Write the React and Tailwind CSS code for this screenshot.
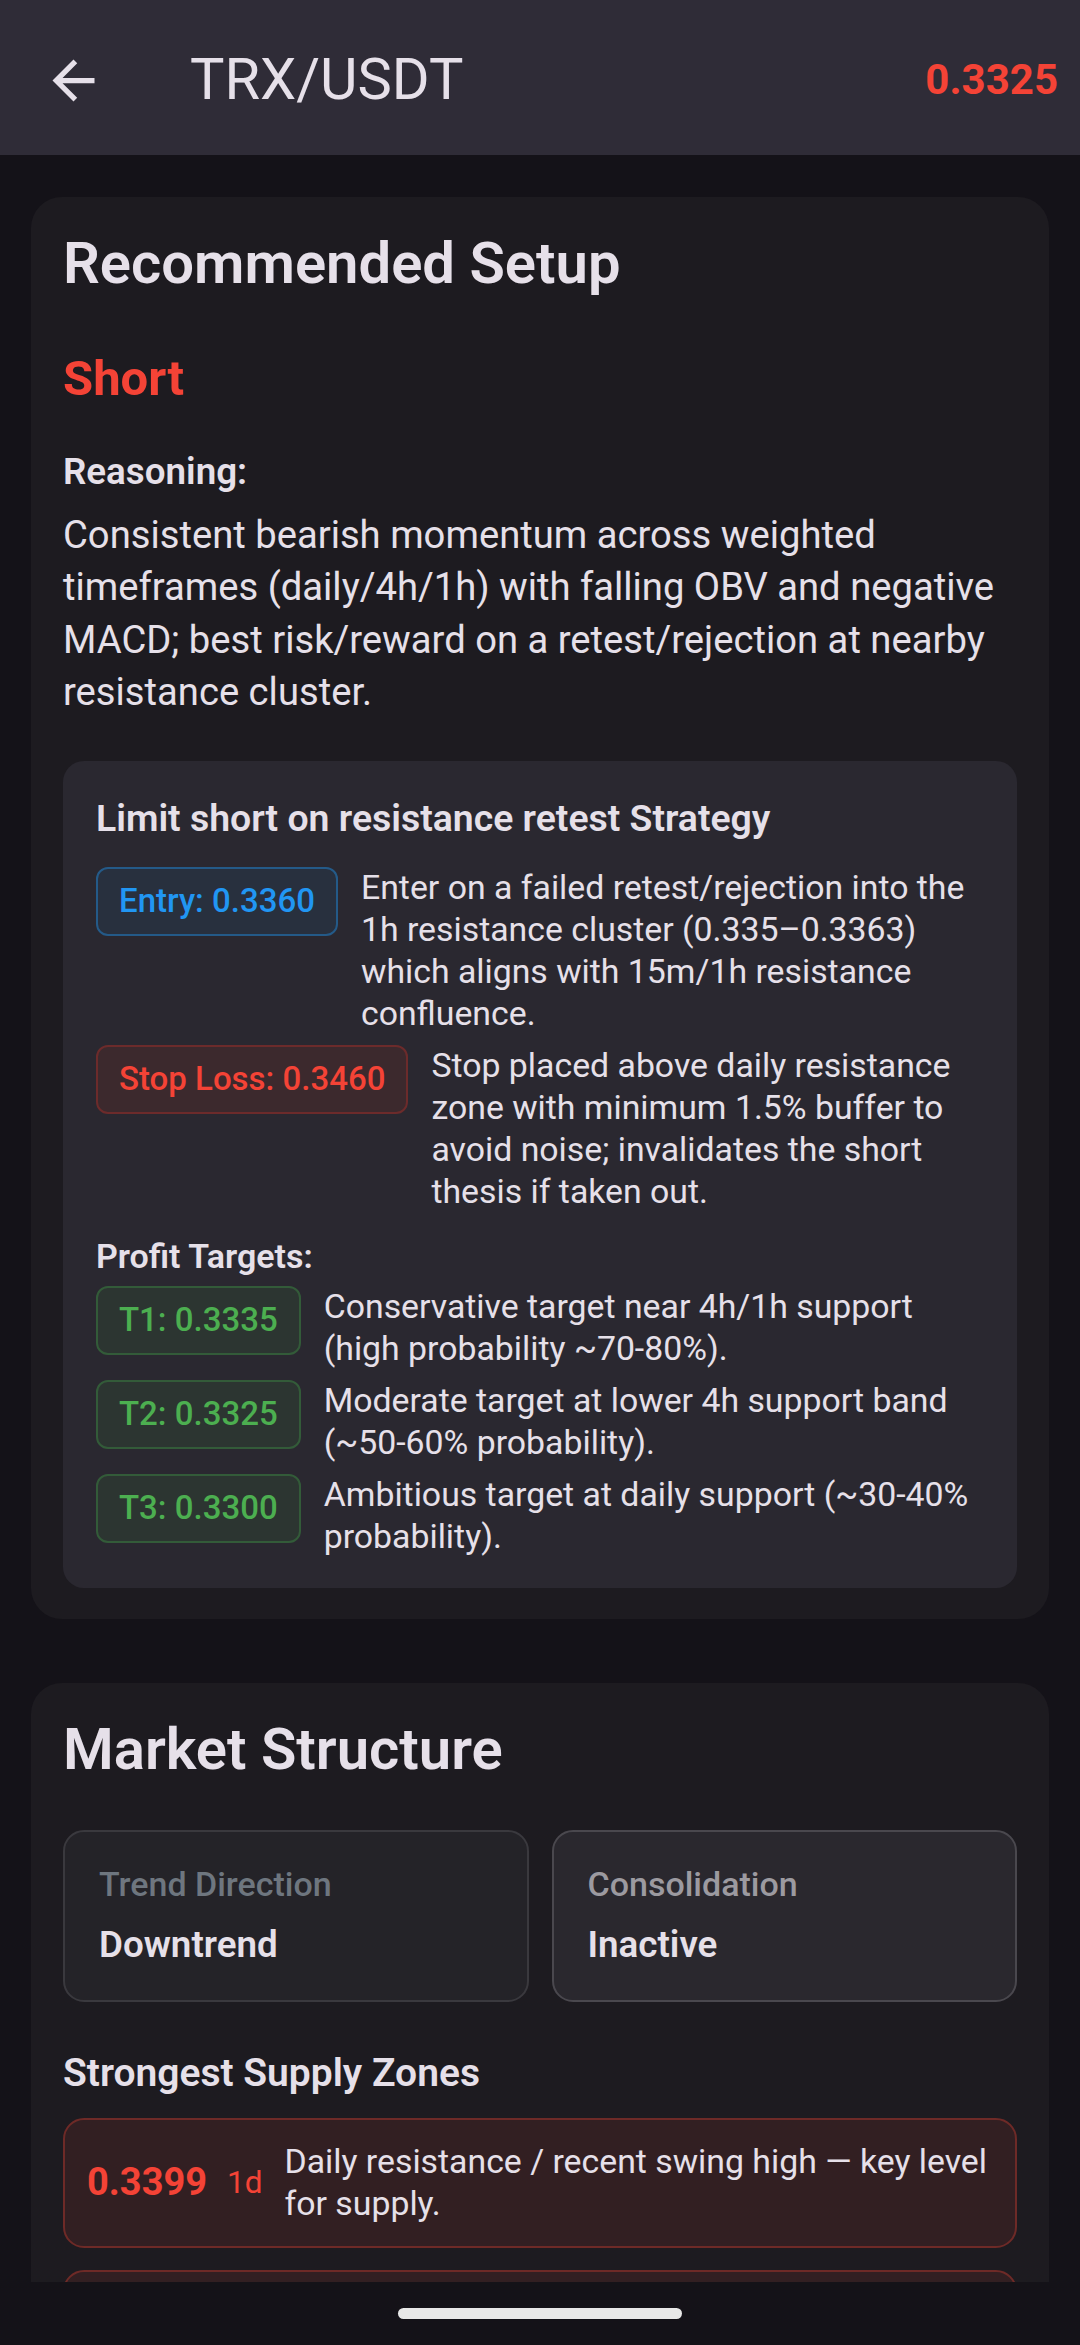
import React from 'react';

const badgeTones = {
  blue: 'bg-[#28303e] border-[#245a88] text-[#2196f3]',
  red: 'bg-[#3c292d] border-[#6c2b2b] text-[#f44336]',
  green: 'bg-[#2c3531] border-[#335b39] text-[#4caf50]',
};

function Badge({ tone, children }) {
  return (
    <div
      className={`shrink-0 h-[69px] px-[21px] flex items-center rounded-[12px] border-2 text-[33px] font-medium whitespace-nowrap ${badgeTones[tone]}`}
    >
      {children}
    </div>
  );
}

function LevelRow({ tone, label, text }) {
  return (
    <div className="flex items-start gap-[23px]">
      <Badge tone={tone}>{label}</Badge>
      <p className="text-[33.8px] leading-[42px] text-[#e6e0e9]">{text}</p>
    </div>
  );
}

const targets = [
  { label: 'T1: 0.3335', text: 'Conservative target near 4h/1h support (high probability ~70-80%).' },
  { label: 'T2: 0.3325', text: 'Moderate target at lower 4h support band (~50-60% probability).' },
  { label: 'T3: 0.3300', text: 'Ambitious target at daily support (~30-40% probability).' },
];

const supplyZones = [
  { price: '0.3399', tf: '1d', text: 'Daily resistance / recent swing high — key level for supply.' },
  { price: '0.3363', tf: '1h', text: '1h resistance cluster aligned with 15m resistance confluence.' },
];

export default function App() {
  return (
    <div className="h-[2345px] w-full flex flex-col bg-[#141218] overflow-hidden font-[Roboto,sans-serif] text-[#e6e0e9]">
      {/* App bar */}
      <header className="h-[155px] shrink-0 bg-[#2f2c37] flex items-center pl-[42px] pr-[22px] pt-[5px]">
        <svg width="63" height="63" viewBox="0 0 24 24" fill="#e6e0e9">
          <path d="M20 11H7.83l5.59-5.59L12 4l-8 8 8 8 1.41-1.41L7.83 13H20v-2z" />
        </svg>
        <h1 className="ml-[85px] text-[57.75px] leading-none font-normal">TRX/USDT</h1>
        <span className="ml-auto text-[42px] leading-none font-bold text-[#f44336]">0.3325</span>
      </header>

      <main className="flex-1 overflow-hidden px-[31px] pt-[42px]">
        {/* Recommended setup */}
        <section className="rounded-[31px] bg-[#1d1b20] px-[32px] pt-[32px] pb-[31px]">
          <h2 className="text-[58px] leading-[68px] font-semibold">Recommended Setup</h2>
          <div className="mt-[52px] text-[49px] leading-[60px] font-bold text-[#f44336]">Short</div>
          <div className="mt-[41px] text-[36.75px] leading-[44px] font-semibold">Reasoning:</div>
          <p className="mt-[15px] text-[38.2px] leading-[52.4px]">
            Consistent bearish momentum across weighted timeframes (daily/4h/1h) with falling OBV and negative MACD; best
            risk/reward on a retest/rejection at nearby resistance cluster.
          </p>

          <div className="mt-[42px] rounded-[21px] bg-[#2a2830] px-[33px] pt-[33px] pb-[30px]">
            <h3 className="text-[37.4px] leading-[48px] font-semibold">Limit short on resistance retest Strategy</h3>
            <div className="mt-[25px] flex flex-col gap-[10px]">
              <LevelRow
                tone="blue"
                label="Entry: 0.3360"
                text="Enter on a failed retest/rejection into the 1h resistance cluster (0.335–0.3363) which aligns with 15m/1h resistance confluence."
              />
              <LevelRow
                tone="red"
                label="Stop Loss: 0.3460"
                text="Stop placed above daily resistance zone with minimum 1.5% buffer to avoid noise; invalidates the short thesis if taken out."
              />
            </div>
            <div className="mt-[22px] text-[34px] leading-[42px] font-semibold">Profit Targets:</div>
            <div className="mt-[9px] flex flex-col gap-[10px]">
              {targets.map((t) => (
                <LevelRow key={t.label} tone="green" label={t.label} text={t.text} />
              ))}
            </div>
          </div>
        </section>

        {/* Market structure */}
        <section className="mt-[64px] rounded-[31px] bg-[#1d1b20] px-[32px] pt-[32px] pb-[31px]">
          <h2 className="text-[58px] leading-[68px] font-semibold">Market Structure</h2>
          <div className="mt-[47px] grid grid-cols-2 gap-[23px]">
            <div className="rounded-[21px] border-2 border-[#3a393e] bg-[#242328] px-[34px] pt-[31px] pb-[33px]">
              <div className="text-[34px] leading-[42px] font-medium text-[#6e767f]">Trend Direction</div>
              <div className="mt-[18px] text-[36.75px] leading-[44px] font-semibold">Downtrend</div>
            </div>
            <div className="rounded-[21px] border-2 border-[#4a484e] bg-[#2a282e] px-[34px] pt-[31px] pb-[33px]">
              <div className="text-[34px] leading-[42px] font-medium text-[#9c9aa0]">Consolidation</div>
              <div className="mt-[18px] text-[36.75px] leading-[44px] font-semibold">Inactive</div>
            </div>
          </div>

          <div className="mt-[48px] text-[39px] leading-[46px] font-semibold">Strongest Supply Zones</div>
          <div className="mt-[22px] flex flex-col gap-[22px]">
            {supplyZones.map((z) => (
              <div
                key={z.price}
                className="flex items-center rounded-[21px] border-2 border-[#6e2a27] bg-[#321f22] pl-[22px] pr-[18px] py-[21px]"
              >
                <span className="shrink-0 text-[38px] font-bold text-[#f44336]">{z.price}</span>
                <span className="shrink-0 ml-[20px] text-[31.5px] text-[#f44336]">{z.tf}</span>
                <p className="ml-[22px] text-[33.8px] leading-[42px]">{z.text}</p>
              </div>
            ))}
          </div>
        </section>
      </main>

      {/* Gesture bar */}
      <div className="h-[63px] shrink-0 bg-[#141218] flex justify-center pt-[26px]">
        <div className="w-[284px] h-[11px] rounded-full bg-[#e8e8e8]" />
      </div>
    </div>
  );
}
